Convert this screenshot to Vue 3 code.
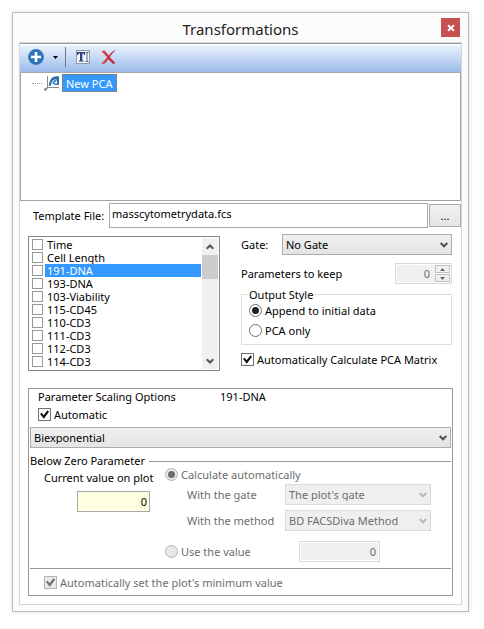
<script setup>
import { ref } from 'vue'

const channels = ref([
  { name: 'Time', on: false },
  { name: 'Cell Length', on: false },
  { name: '191-DNA', on: false },
  { name: '193-DNA', on: false },
  { name: '103-Viability', on: false },
  { name: '115-CD45', on: false },
  { name: '110-CD3', on: false },
  { name: '111-CD3', on: false },
  { name: '112-CD3', on: false },
  { name: '114-CD3', on: false }
])
const selected = ref('191-DNA')
const file = ref('masscytometrydata.fcs')
const keep = ref('0')
const output = ref('append')
const autoMatrix = ref(true)
const autoScale = ref(true)
const autoMin = ref(true)
const belowZero = ref('calc')
const current = ref('0')
const fixedValue = ref('0')
</script>

<template>
  <main class="window">
    <header class="titlebar">
      <h1>Transformations</h1>
      <button class="close" aria-label="Close">
        <svg width="8" height="8" viewBox="0 0 8 8"><path d="M1 1.3L7 6.7M7 1.3L1 6.7" stroke="#fff" stroke-width="1.9" /></svg>
      </button>
    </header>

    <div class="client">
      <div class="toolbar">
        <button aria-label="Add">
          <svg width="16" height="16" viewBox="0 0 16 16">
            <circle cx="8" cy="8" r="7.9" fill="#2f73b8" />
            <path d="M8 3V13M3 8H13" stroke="#fff" stroke-width="2.6" />
          </svg>
        </button>
        <button class="drop" aria-label="Add options">
          <svg width="5" height="3" viewBox="0 0 5 3"><path d="M0 0H5L2.5 3Z" fill="#000" /></svg>
        </button>
        <span class="divider"></span>
        <button class="rename" aria-label="Rename">
          <svg width="14" height="14" viewBox="0 0 14 14">
            <rect x=".5" y=".5" width="13" height="13" fill="#f1f4f9" stroke="#8f9aaa" />
            <path d="M1 2H9V5H8L7.500 3.500H6.300V10.500H7.500V11.500H2.800V10.500H4V3.500H2.500L2 5H1Z" fill="#2c4382" />
            <path d="M9.500 2.500H12.500M11 2.500V11.500M9.500 11.500H12.500" stroke="#5c6c8c" fill="none" />
          </svg>
        </button>
        <button class="delete" aria-label="Delete">
          <svg width="15" height="15" viewBox="0 0 15 15">
            <defs>
              <linearGradient id="cross" x1="0" x2="1"><stop offset="0" stop-color="#e35050" /><stop offset="1" stop-color="#b4182c" /></linearGradient>
            </defs>
            <path d="M.3 1.500L3 .3C5 2 6.500 3.700 7.700 5.700C9.800 3 11.500 1.200 13.800 .2L14.300 .6C12 2.500 10.300 4.700 8.900 7.200C11 9.500 12.500 11.300 14.300 13L12.300 14C10.500 12.700 8.800 11 7.500 9.200C5.900 11.400 4.500 13 2.800 14.300L.5 13.300C2.500 11.500 4.500 9.500 6.200 7.200C4.400 5 2.500 3.300 .3 1.500Z" fill="url(#cross)" />
          </svg>
        </button>
      </div>

      <div class="tree">
        <div class="node">
          <span class="twig"></span>
          <svg width="16" height="16" viewBox="0 0 16 16">
            <path d="M3.500 1V12.500H15" fill="none" stroke="#8a8a8a" />
            <path d="M3.500 12.500L1 15" stroke="#777" stroke-width="1.500" />
            <circle cx="1.300" cy="14.500" r="1.200" fill="#808080" />
            <path d="M4.800 11C5.500 4 8.500 1 13.500 1.200L15 1.500V9.800H13.500C13 8 13.300 6 12.800 4.800C9.500 3.800 7.500 6.500 7 10.500Z" fill="#2a6cac" />
            <path d="M12.500 5.500C10.500 6 9.500 7 9.300 8.300L12 9.300H14" fill="none" stroke="#2a6cac" stroke-width="1.400" />
          </svg>
          <button class="node-name">New PCA</button>
        </div>
      </div>

      <div class="file">
        <label for="file">Template File:</label>
        <input id="file" v-model="file" type="text" />
        <button class="browse">...</button>
      </div>

      <div class="setup">
        <div class="list">
          <ul>
            <li v-for="c in channels" :key="c.name">
              <label :class="{ picked: c.name === selected }">
                <input v-model="c.on" type="checkbox" /><span>{{ c.name }}</span>
              </label>
            </li>
          </ul>
          <div class="scroll">
            <button aria-label="Scroll up">
              <svg width="8" height="6" viewBox="0 0 8 6"><path d="M.7 4.700L4 1.500L7.300 4.700" fill="none" stroke="#555" stroke-width="2" /></svg>
            </button>
            <span class="thumb"></span>
            <button class="down" aria-label="Scroll down">
              <svg width="8" height="6" viewBox="0 0 8 6"><path d="M.7 1.300L4 4.500L7.300 1.300" fill="none" stroke="#555" stroke-width="2" /></svg>
            </button>
          </div>
        </div>

        <div class="options">
          <div class="gate">
            <label for="gate">Gate:</label>
            <div class="select">
              <select id="gate"><option>No Gate</option></select>
              <svg width="8" height="6" viewBox="0 0 8 6"><path d="M.7 1L4 4.300L7.300 1" fill="none" stroke="#505050" stroke-width="2" /></svg>
            </div>
          </div>
          <div class="keep">
            <label for="keep">Parameters to keep</label>
            <div class="spinner">
              <input id="keep" v-model="keep" type="text" disabled />
              <div class="steps">
                <button disabled aria-label="Increase"><svg width="5" height="3" viewBox="0 0 5 3"><path d="M0 3H5L2.500 0Z" fill="#666" /></svg></button>
                <button disabled aria-label="Decrease"><svg width="5" height="3" viewBox="0 0 5 3"><path d="M0 0H5L2.500 3Z" fill="#666" /></svg></button>
              </div>
            </div>
          </div>
          <fieldset>
            <legend>Output Style</legend>
            <label class="choice"><input v-model="output" type="radio" name="output" value="append" />Append to initial data</label>
            <label class="choice"><input v-model="output" type="radio" name="output" value="only" />PCA only</label>
          </fieldset>
          <label class="choice"><input v-model="autoMatrix" type="checkbox" />Automatically Calculate PCA Matrix</label>
        </div>
      </div>

      <section class="scaling">
        <div class="scaling-head">
          <span>Parameter Scaling Options</span>
          <span>{{ selected }}</span>
        </div>
        <label class="choice automatic"><input v-model="autoScale" type="checkbox" />Automatic</label>
        <div class="select">
          <select aria-label="Scale"><option>Biexponential</option></select>
          <svg width="8" height="6" viewBox="0 0 8 6"><path d="M.7 1L4 4.300L7.300 1" fill="none" stroke="#505050" stroke-width="2" /></svg>
        </div>
        <h2>Below Zero Parameter</h2>
        <div class="below">
          <div class="current">
            <label for="current">Current value on plot</label>
            <input id="current" v-model="current" type="text" />
          </div>
          <div class="calc">
            <label class="choice off"><input v-model="belowZero" type="radio" name="below" value="calc" disabled />Calculate automatically</label>
            <div class="pair">
              <label for="plot-gate">With the gate</label>
              <div class="select off">
                <select id="plot-gate" disabled><option>The plot's gate</option></select>
                <svg width="8" height="6" viewBox="0 0 8 6"><path d="M.7 1L4 4.300L7.300 1" fill="none" stroke="#b8b8b8" stroke-width="2" /></svg>
              </div>
              <label for="method">With the method</label>
              <div class="select off">
                <select id="method" disabled><option>BD FACSDiva Method</option></select>
                <svg width="8" height="6" viewBox="0 0 8 6"><path d="M.7 1L4 4.300L7.300 1" fill="none" stroke="#b8b8b8" stroke-width="2" /></svg>
              </div>
            </div>
            <div class="fixed">
              <label class="choice off"><input v-model="belowZero" type="radio" name="below" value="fixed" disabled />Use the value</label>
              <input v-model="fixedValue" class="value" type="text" disabled aria-label="Value" />
            </div>
          </div>
        </div>
        <footer>
          <label class="choice off"><input v-model="autoMin" type="checkbox" disabled />Automatically set the plot's minimum value</label>
        </footer>
      </section>
    </div>
  </main>
</template>

<style>
body { background: #fff; }
</style>

<style scoped>
* { box-sizing: border-box; }
.window {
  margin: 12px 15px 17px 12px;
  padding: 0 6px 6px;
  border: 1px solid #bababa;
  background: #fbfbfb;
  box-shadow: 0 0 5px #ddd;
  color: #000;
  font: 11px/13px "Noto Sans", "Open Sans", sans-serif;
}
input, select, button { font: inherit; color: inherit; margin: 0; border-radius: 0; }
button { padding: 0; border: 0; background: none; display: grid; place-items: center; }
svg { display: block; }
.titlebar { position: relative; height: 29px; display: grid; place-items: center; }
h1 { margin: 0; padding-top: 3px; color: #222; font-size: 15px; font-weight: 400; line-height: 24px; }
.close { position: absolute; top: 5px; right: 2px; width: 19px; height: 19px; background: #c75050; }
.client { border: 1px solid #d4d4d4; background: #fff; padding-bottom: 8px; }
.toolbar {
  height: 30px;
  padding: 0 8px 2px;
  display: flex;
  align-items: center;
  border-top: 1px solid #999;
  border-bottom: 1px solid #a8a8a8;
  background: linear-gradient(#fff 1px, #e8f1fd 2px, #9bbbea);
}
.drop { margin-left: 9px; }
.divider { width: 1px; height: 20px; margin-left: 7px; background: #6f7c90; }
.rename { margin-left: 10px; }
.delete { margin-left: 11px; }
.tree { height: 128px; padding: 1px 11px; border: 1px solid #a4a4a4; border-top: 0; }
.node { display: flex; align-items: center; }
.twig { width: 10px; margin-right: 2px; border-top: 1px dotted #999; }
.node-name { height: 18px; margin-left: 2px; padding: 0 3px; border: 1px dotted #c86a1c; background: #3399ff; color: #fff; }
.file { display: flex; align-items: center; padding: 2px 0 0 13px; }
.file label { width: 76px; }
.file input { flex: 1; min-width: 0; height: 25px; padding: 0 2px 4px; border: 1px solid #aaa; background: #fff; }
.browse { width: 32px; height: 23px; margin-left: 1px; border: 1px solid #acacac; background: linear-gradient(#f0f0f0, #e5e5e5); }
.setup { display: flex; align-items: flex-start; gap: 21px; padding: 6px 9px 0 8px; }
.list { flex: 0 0 192px; margin-top: 2px; padding: 1px 1px 1px 3px; display: flex; border: 1px solid #828790; }
ul { flex: 1; margin: 0; padding: 0 0 1px; list-style: none; }
li label { display: flex; height: 13px; }
li input[type="checkbox"] { width: 11px; height: 11px; border-color: #999; margin: 1px 2px 0 0; }
li span { flex: 1; padding-left: 2px; line-height: 13px; }
.picked span { background: #3399ff; color: #fff; }
.scroll { width: 16px; margin-left: 1px; display: flex; flex-direction: column; background: #f0f0f0; }
.scroll button { width: 16px; height: 17px; }
.thumb { height: 24px; background: #cdcdcd; }
.scroll .down { margin-top: auto; }
.options { flex: 1; min-width: 0; }
.gate { display: flex; align-items: center; }
.gate label { width: 41px; }
.gate .select { flex: 1; }
.keep { display: flex; align-items: center; justify-content: space-between; margin-top: 8px; }
.spinner { width: 57px; height: 21px; padding: 1px; display: flex; border: 1px solid #d9d9d9; background: #fff; }
.spinner input { flex: 1; min-width: 0; padding: 0 5px; border: 0; background: #f0f0f0; color: #6d6d6d; text-align: right; }
.steps { width: 15px; display: grid; grid-template-rows: 1fr 1fr; gap: 1px; }
.steps button { border: 1px solid #c0c0c0; background: #f0f0f0; }
fieldset { min-width: 0; margin: 4px 0 0; padding: 3px 7px 7px; border: 1px solid #dcdcdc; display: grid; gap: 7px; }
legend { margin-left: -1px; padding: 0 1px; line-height: 13px; }
.choice { display: flex; align-items: center; gap: 3px; height: 13px; }
fieldset + .choice { margin-top: 8px; }
.off, .pair label { color: #6d6d6d; }
input[type="checkbox"], input[type="radio"] {
  appearance: none;
  flex: none;
  width: 13px;
  height: 13px;
  border: 1px solid #707070;
  background: #fff;
  display: grid;
  place-items: center;
}
input[type="radio"] { border-radius: 50%; }
input[type="checkbox"]:checked::after {
  content: "";
  width: 9px;
  height: 9px;
  background: #111;
  clip-path: polygon(0 45%, 18% 30%, 40% 58%, 84% 3%, 100% 20%, 42% 96%);
}
input[type="radio"]:checked::after { content: ""; width: 7px; height: 7px; border-radius: 50%; background: #222; }
.off input[type="checkbox"], .off input[type="radio"] { border-color: #b4b4b4; background: #e8e8e8; }
.off input:checked::after { background: #6d6d6d; }
.select { display: grid; align-items: center; height: 21px; }
.select > * { grid-area: 1 / 1; }
.select svg { justify-self: end; margin-right: 4px; pointer-events: none; }
select {
  appearance: none;
  width: 100%;
  height: 21px;
  padding: 0 16px 0 3px;
  border: 1px solid #acacac;
  background: linear-gradient(#f0f0f0, #e4e4e4);
}
.select.off select { border-color: #d9d9d9; background: #efefef; color: #6d6d6d; opacity: 1; }
.scaling { margin: 17px 8px 0; padding: 1px 1px 2px; border: 1px solid #999; }
.scaling-head { display: grid; grid-template-columns: 182px 1fr; padding: 0 8px; }
.automatic { margin: 5px 8px 6px; }
h2 { display: flex; align-items: center; gap: 4px; margin: 6px 0 0; font-size: 11px; font-weight: 400; line-height: 14px; }
h2::after { content: ""; flex: 1; height: 1px; background: #999; }
.below { display: flex; }
.current { width: 120px; margin: 3px 1px 0 14px; white-space: nowrap; }
.current label { display: block; }
.current input { display: block; width: 73px; height: 21px; margin: 7px 0 0 33px; }
.current input, .value { padding: 0 2px; border: 1px solid #a8a8a8; background: #ffffe1; text-align: right; }
.calc { flex: 1; min-width: 0; padding-right: 20px; }
.pair { display: grid; grid-template-columns: 98px 1fr; align-items: center; gap: 5px 0; margin: 3px 0 0 22px; }
.fixed { display: flex; align-items: center; margin-top: 10px; }
.fixed .choice { width: 134px; }
.value { width: 81px; height: 21px; padding: 0 3px; border-color: #d9d9d9; background: #f0f0f0; box-shadow: inset 0 0 0 1px #fff; color: #6d6d6d; }
footer { margin-top: 6px; padding: 7px 14px 4px; border-top: 1px solid #999; }
</style>
